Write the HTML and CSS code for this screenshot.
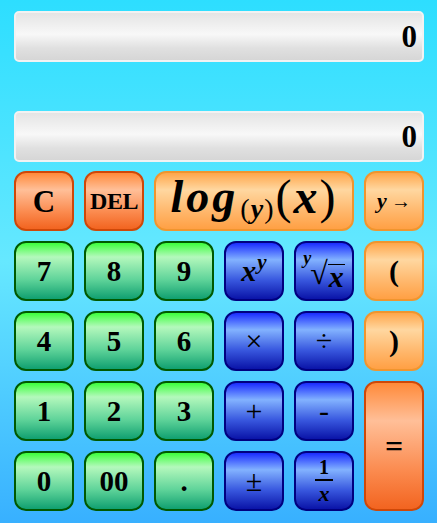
FILE: index.html
```html
<!DOCTYPE html>
<html>
<head>
<meta charset="utf-8">
<link rel="stylesheet" href="styles.css">
</head>
<body>
<div class="calc">
  <div class="display"><span>0</span></div>
  <div class="display second"><span>0</span></div>
  <div class="keys">
    <div class="key red big">C</div>
    <div class="key red del">DEL</div>
    <div class="key amber log"><i>log</i><span class="sub">(<i>y</i>)</span><span class="arg">(<i>x</i>)</span></div>
    <div class="key amber small"><i>y</i>&thinsp;<span class="arrow">→</span></div>

    <div class="key green">7</div>
    <div class="key green">8</div>
    <div class="key green">9</div>
    <div class="key blue math"><i>x</i><sup>y</sup></div>
    <div class="key blue root"><span class="idx">y</span><span class="rad">√</span><span class="over">x</span></div>
    <div class="key amber paren">(</div>

    <div class="key green">4</div>
    <div class="key green">5</div>
    <div class="key green">6</div>
    <div class="key blue op">×</div>
    <div class="key blue op">÷</div>
    <div class="key amber paren">)</div>

    <div class="key green">1</div>
    <div class="key green">2</div>
    <div class="key green">3</div>
    <div class="key blue op">+</div>
    <div class="key blue op">-</div>
    <div class="key red eq">=</div>

    <div class="key green">0</div>
    <div class="key green">00</div>
    <div class="key green">.</div>
    <div class="key blue op">±</div>
    <div class="key blue frac"><span class="num">1</span><span class="den"><i>x</i></span></div>
  </div>
</div>
</body>
</html>
```
FILE: styles.css
```css
html, body {
  margin: 0;
  padding: 0;
  height: 523px;
  overflow: hidden;
}
body {
  background: linear-gradient(to bottom, #2ddeff 0%, #66e8ff 50%, #38b0ff 100%);
  font-family: "Liberation Serif", "Times New Roman", serif;
  color: #000;
}
.calc {
  padding: 11px 13px 0 14px;
}
.display {
  box-sizing: border-box;
  height: 51px;
  border: 2px solid #f2f2f2;
  border-radius: 5px;
  background: linear-gradient(to bottom, #e4e4e4 0%, #f8f8f8 45%, #e0e0e0 75%, #d6d6d6 100%);
  display: flex;
  align-items: center;
  justify-content: flex-end;
  padding-right: 5px;
  font-weight: bold;
  font-size: 31px;
}
.display.second {
  margin-top: 49px;
}
.keys {
  margin-top: 9px;
  display: grid;
  grid-template-columns: repeat(6, 60px);
  grid-template-rows: repeat(5, 60px);
  gap: 10px;
}
.key {
  box-sizing: border-box;
  border: 2px solid;
  border-radius: 12px;
  display: flex;
  align-items: center;
  justify-content: center;
  font-weight: bold;
  font-size: 29px;
  line-height: 1;
}
.key i {
  font-weight: bold;
  font-style: italic;
}
.red {
  border-color: #cf4808;
  background: linear-gradient(to bottom, #ff8a3a 0%, #ffbf98 30%, #fb8a4e 70%, #f26420 100%);
}
.amber {
  border-color: #f0952e;
  background: linear-gradient(to bottom, #ffa64a 0%, #ffd7a0 30%, #ffb66a 70%, #ffa044 100%);
}
.green {
  border-color: #005a00;
  background: linear-gradient(to bottom, #3cff3c 0%, #b4f8bc 25%, #60d49a 65%, #10a070 100%);
}
.blue {
  border-color: #000080;
  background: linear-gradient(to bottom, #1a2cff 0%, #82b2ff 30%, #3a5ae0 65%, #0a14a8 100%);
}
.big { font-size: 31px; }
.del { font-size: 24px; letter-spacing: -0.5px; }
.log {
  grid-column: span 3;
  font-size: 46px;
  font-weight: normal;
  letter-spacing: 3px;
  padding-bottom: 8px;
}
.log .sub {
  font-size: 28px;
  position: relative;
  top: 12px;
  margin: 0 1px 0 2px;
  letter-spacing: 1px;
}
.log .arg {
  font-size: 48px;
  letter-spacing: 2px;
}
.small {
  font-size: 22px;
  font-weight: normal;
}
.small .arrow { font-size: 20px; }
.math {
  font-size: 30px;
  font-weight: normal;
}
.math sup {
  font-size: 21px;
  font-style: italic;
  font-weight: bold;
  position: relative;
  top: -9px;
  margin-left: 1px;
  vertical-align: baseline;
}
.root {
  font-weight: bold;
  font-style: italic;
  font-size: 30px;
  align-items: flex-end;
  padding-bottom: 10px;
}
.root .idx {
  font-size: 18px;
  align-self: flex-start;
  margin-top: 6px;
  margin-right: -1px;
}
.root .rad {
  font-style: normal;
  font-weight: normal;
  font-size: 32px;
  line-height: 32px;
}
.root .over {
  border-top: 1.5px solid #000;
  line-height: 24px;
  padding: 0 1px;
}
.paren {
  font-size: 30px;
}
.op {
  font-size: 30px;
  font-weight: normal;
}
.eq {
  grid-row: span 2;
  font-size: 32px;
}
.frac {
  flex-direction: column;
  font-weight: normal;
  gap: 2px;
}
.frac .num {
  font-weight: bold;
  font-size: 20px;
  padding: 0 2px 2px;
  border-bottom: 2px solid #000;
  width: 14px;
  text-align: center;
}
.frac .den {
  font-size: 22px;
}
```
